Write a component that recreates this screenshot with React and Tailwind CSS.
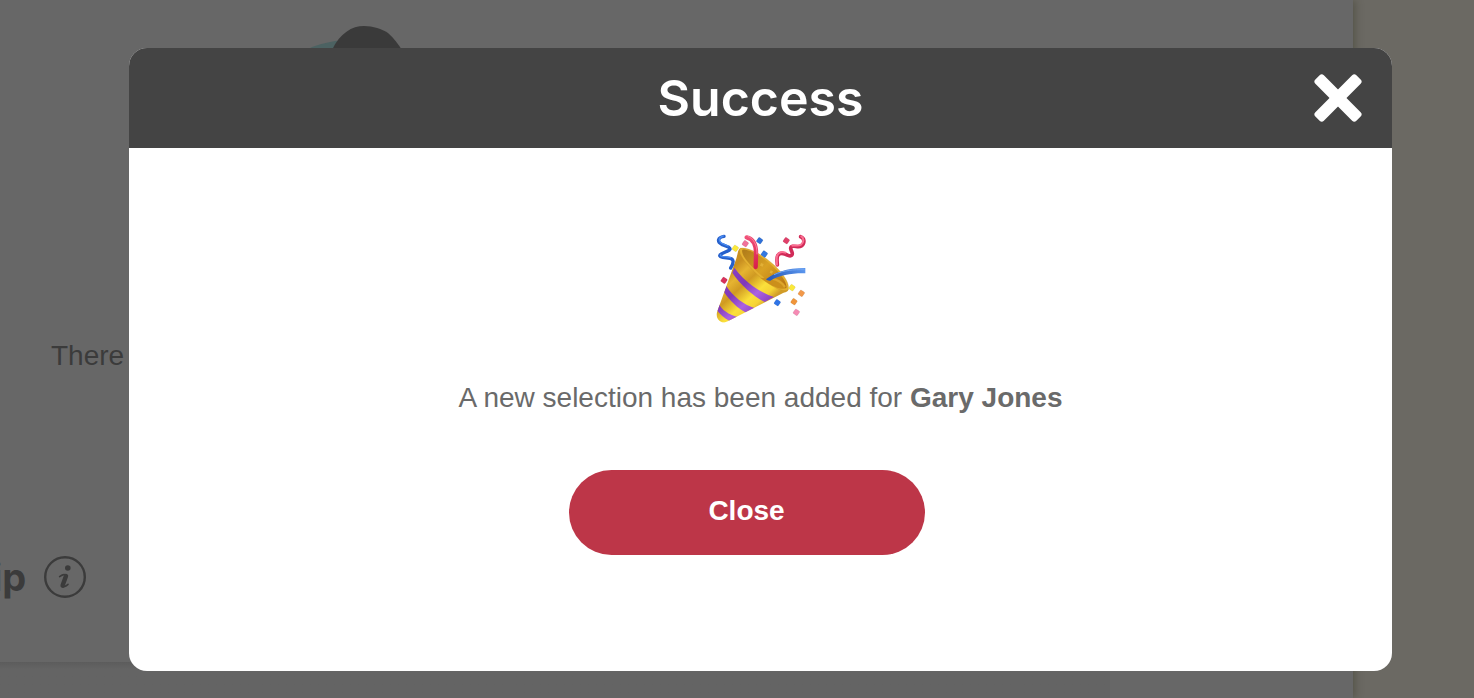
import { useState } from "react";

function CrossIcon() {
  return (
    <svg width="50" height="50" viewBox="0 0 50 50" fill="currentColor" aria-hidden="true">
      <rect x="-4" y="19" width="58" height="12" rx="3" transform="rotate(45 25 25)" />
      <rect x="-4" y="19" width="58" height="12" rx="3" transform="rotate(-45 25 25)" />
    </svg>
  );
}

function InfoIcon() {
  return (
    <svg width="42" height="42" viewBox="0 0 42 42" fill="none" stroke="currentColor" aria-hidden="true">
      <circle cx="21" cy="21" r="19.8" strokeWidth="2.4" />
      <circle cx="23.8" cy="12" r="2.8" fill="currentColor" stroke="none" />
      <path d="M15.6 20.6C18 18.9 20.6 18.2 21.6 19.4C22 20.2 17.2 29.2 18.2 30.4C19.2 31.6 21.8 30.4 24 28.4" strokeWidth="1.6" strokeLinecap="round" />
      <path d="M22 20L18.6 29.6" strokeWidth="4.4" strokeLinecap="round" />
    </svg>
  );
}

const CONFETTI = [
  { x: 105, y: 85, fill: "#fbe93a" },
  { x: 135, y: 71, fill: "#f0719a" },
  { x: 178, y: 62, fill: "#2f70d8" },
  { x: 192, y: 102, fill: "#3478e0" },
  { x: 258, y: 62, fill: "#e0406a" },
  { x: 71, y: 181, fill: "#d8315a" },
  { x: 231, y: 248, fill: "#2f74e6" },
  { x: 275, y: 203, fill: "#fbe93a" },
  { x: 303, y: 220, fill: "#f2994a" },
  { x: 281, y: 245, fill: "#f0953a" },
  { x: 288, y: 277, fill: "#f58bb4" },
];

function PartyPopper() {
  return (
    <svg width="90" height="90" viewBox="47 42 270 270" fill="none" role="img" aria-label="Party popper">
      <defs>
        <linearGradient id="cone" x1="85" y1="155" x2="185" y2="265" gradientUnits="userSpaceOnUse">
          <stop offset="0" stopColor="#c98f20" />
          <stop offset="0.2" stopColor="#e6b431" />
          <stop offset="0.4" stopColor="#d09a22" />
          <stop offset="0.68" stopColor="#fbe03a" />
          <stop offset="0.85" stopColor="#f6d335" />
          <stop offset="1" stopColor="#d19c28" />
        </linearGradient>
        <linearGradient id="mouth" x1="130" y1="90" x2="245" y2="205" gradientUnits="userSpaceOnUse">
          <stop offset="0" stopColor="#b07c1a" />
          <stop offset="0.5" stopColor="#d9a123" />
          <stop offset="1" stopColor="#b87614" />
        </linearGradient>
        <linearGradient id="stripe" x1="85" y1="155" x2="185" y2="265" gradientUnits="userSpaceOnUse">
          <stop offset="0" stopColor="#8a3fc4" />
          <stop offset="0.4" stopColor="#8038b8" />
          <stop offset="0.7" stopColor="#ab62e0" />
          <stop offset="1" stopColor="#8a40c0" />
        </linearGradient>
        <linearGradient id="redRibbon" x1="135" y1="45" x2="172" y2="140" gradientUnits="userSpaceOnUse">
          <stop offset="0" stopColor="#f2557c" />
          <stop offset="1" stopColor="#d91f4c" />
        </linearGradient>
        <linearGradient id="blueRibbon" x1="200" y1="180" x2="315" y2="150" gradientUnits="userSpaceOnUse">
          <stop offset="0" stopColor="#2456b8" />
          <stop offset="1" stopColor="#5b97ef" />
        </linearGradient>
        <clipPath id="coneClip">
          <path d="M118 86C111 92 113 104 105 124L50 277C46 289 52 302 65 307C71 309 77 306 84 303L244 221C256 216 264 215 265 207Z" />
        </clipPath>
      </defs>

      {/* cone body with its bands */}
      <g clipPath="url(#coneClip)">
        <rect x="40" y="80" width="230" height="235" fill="url(#cone)" />
        <path d="M96 158C120 194 156 226 193 246L221 231C176 216 132 184 102 143Z" fill="url(#stripe)" />
        <path d="M71 216C88 242 113 266 138 278L165 265C131 255 98 230 78 198Z" fill="url(#stripe)" />
        <path d="M49 270C58 282 72 295 88 303L112 291C85 284 65 270 56 252Z" fill="url(#stripe)" />
      </g>

      {/* open rim */}
      <path
        d="M119 85C137 81 178 96 221 135C250 162 270 193 263 210C250 219 208 198 171 164C134 130 111 98 119 85Z"
        fill="#e3b02f"
        stroke="#c18a22"
        strokeWidth="1"
      />
      <path
        d="M126 89C144 87 180 104 216 138C244 164 262 190 258 204C242 208 207 189 174 158C143 129 121 103 126 89Z"
        fill="url(#mouth)"
      />
      <path d="M182 129L190 132L187 140L179 137Z M211 151L218 154L215 161L208 158Z" fill="#e2b036" />
      <path d="M180 174L222 173L256 203C240 214 205 192 180 174Z" fill="#cb8f1b" />
      <path d="M215 176C231 179 246 189 254 201" stroke="#dda52c" strokeWidth="7" />

      {/* streamers */}
      <path d="M139 52C157 56 168 74 167 104L166 141" stroke="url(#redRibbon)" strokeWidth="13" strokeLinecap="round" />
      <path d="M142 49C160 55 171 76 170 103" stroke="#fa819c" strokeWidth="3" />
      <path d="M197 178C222 158 258 144 315 144V160C273 159 239 166 210 182C206 183 199 181 197 178Z" fill="url(#blueRibbon)" />
      <path d="M221 164C252 150 280 149 313 149" stroke="#6fa4f2" strokeWidth="3" />

      <g strokeLinecap="round" strokeLinejoin="round">
        <path d="M71 49C51 52 50 66 64 73L84 81C92 86 91 90 80 94L64 101C55 106 57 110 67 112L89 115C101 117 101 128 91 144" stroke="#2660cc" strokeWidth="10" />
        <path d="M69 48C53 53 54 64 65 70L83 78M61 104C58 109 66 110 74 110L91 113" stroke="#4a8af0" strokeWidth="4" />
        <path d="M301 50C313 54 314 70 303 78C294 84 286 77 277 79C268 81 271 88 274 94C279 105 273 110 263 106C248 98 238 96 232 107C228 117 231 126 231 135" stroke="#d12b58" strokeWidth="11" />
        <path d="M303 49C312 54 310 69 302 74C292 80 282 74 276 77M255 98C240 93 230 100 229 114L230 134" stroke="#fb6f92" strokeWidth="6" />
      </g>

      {CONFETTI.map((c) => (
        <rect
          key={`${c.x}-${c.y}`}
          x={c.x - 8}
          y={c.y - 8}
          width="16"
          height="16"
          rx="3"
          fill={c.fill}
          stroke="#00000030"
          strokeWidth="1"
          transform={`rotate(35 ${c.x} ${c.y})`}
        />
      ))}
    </svg>
  );
}

function PageBehind() {
  return (
    <div className="flex h-screen overflow-hidden bg-[#6b6963] text-[#3b3b3b]" aria-hidden="true">
      <main className="flex min-w-0 flex-1 flex-col bg-[#676767] shadow-[2px_0_8px_rgba(50,50,30,0.4)]">
        <section className="flex h-[662px] shrink-0 flex-col">
          <svg className="mt-6 ml-[300px] shrink-0" width="120" height="60" viewBox="0 0 120 60">
            <path d="M10 24C19 20 31 17 45 16V60H10Z" fill="#4c6262" />
            <path d="M32 26C40 9 52 2 64 2C73 2 82 5 88 9C94 14 98 20 102 26V60H32Z" fill="#3a3a3a" />
          </svg>
          <p className="mt-64 ml-[51px] text-[28px] leading-8">There</p>
          <div className="mt-[184px] -ml-2 flex items-center gap-[18px]">
            <h2 className="font-['Inter',sans-serif] text-[38px] leading-10 font-bold">ip</h2>
            <InfoIcon />
          </div>
        </section>
        <div className="flex flex-1">
          <div className="mr-[243px] flex-1 rounded-tr-lg bg-linear-to-b from-[#5c5c5c] to-[#646464] to-20%" />
        </div>
      </main>
      <aside className="w-[121px] shrink-0" />
    </div>
  );
}

export default function App() {
  const [open, setOpen] = useState(true);

  return (
    <div className="font-['Liberation_Sans',Arial,sans-serif]">
      <PageBehind />

      {open && (
        <div className="fixed inset-0 pt-12 pr-[82px] pl-[129px]">
          <div
            role="dialog"
            aria-modal="true"
            aria-labelledby="dialog-title"
            className="overflow-hidden rounded-[18px] bg-white"
          >
            <header className="grid h-[100px] grid-cols-[1fr_auto_1fr] items-center bg-[#444444] px-[29px] text-white">
              <h1
                id="dialog-title"
                className="col-start-2 font-['Inter',sans-serif] text-[50px] leading-none font-semibold"
              >
                Success
              </h1>
              <button type="button" aria-label="Dismiss" onClick={() => setOpen(false)} className="justify-self-end">
                <CrossIcon />
              </button>
            </header>

            <div className="flex flex-col items-center px-8 pt-[86px] pb-[116px]">
              <PartyPopper />
              <p className="mt-14 text-center text-[28px] leading-9 text-[#6a6a6a]">
                A new selection has been added for <strong>Gary Jones</strong>
              </p>
              <button
                type="button"
                onClick={() => setOpen(false)}
                className="mt-[54px] mr-7 w-[356px] rounded-full bg-[#bd3648] pt-6 pb-7 text-[28px] leading-[33px] font-bold text-white"
              >
                Close
              </button>
            </div>
          </div>
        </div>
      )}
    </div>
  );
}
